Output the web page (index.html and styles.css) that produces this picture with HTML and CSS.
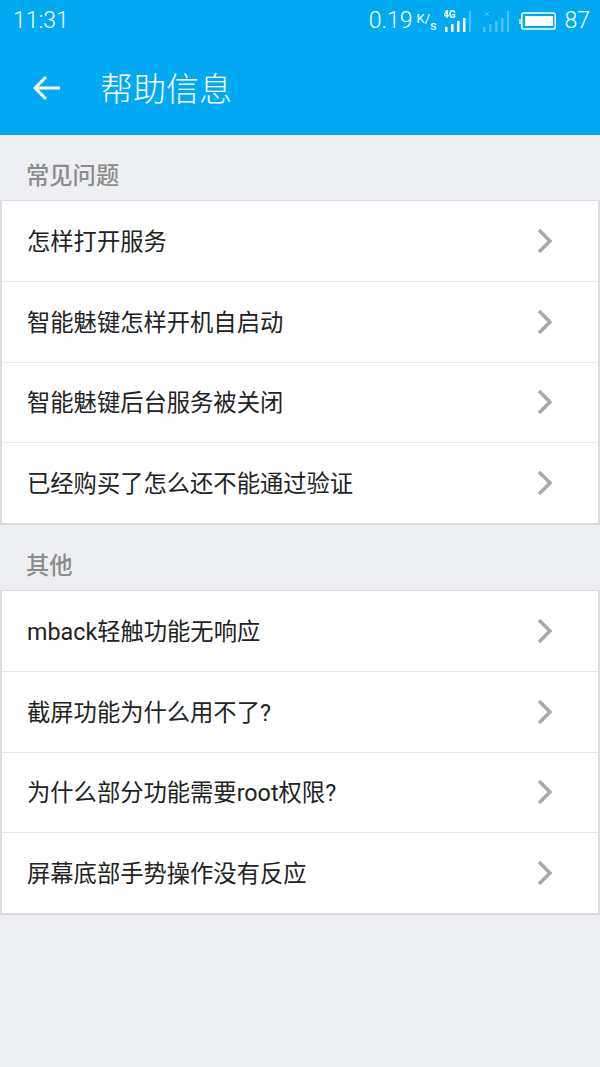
FILE: index.html
```html
<!DOCTYPE html>
<html lang="zh-CN">
<head>
  <meta charset="UTF-8">
  <meta name="viewport" content="width=device-width, initial-scale=1">
  <title>帮助信息</title>
  <link rel="stylesheet" href="styles.css">
</head>
<body>

<header class="top">
  <div class="statusbar">
    <span class="hora">11:31</span>
    <div class="status-right">
      <span class="velocidad">0.19</span>
      <span class="unidad"><span class="u-k">K</span><span>/</span><span class="u-s">s</span></span>
      <svg class="senal" width="28" height="24" viewBox="0 0 28 24">
        <text x="-1" y="9" class="red-txt">4G</text>
        <g fill="#fff">
          <rect x="1" y="18" width="2.5" height="5"/>
          <rect x="7" y="15" width="2.5" height="8"/>
          <rect x="13" y="12" width="2.5" height="11"/>
          <rect x="19" y="9" width="2.5" height="14"/>
        </g>
        <rect x="25" y="2" width="2" height="21" fill="#fff" opacity=".3"/>
      </svg>
      <svg class="senal senal-off" width="28" height="24" viewBox="0 0 28 24">
        <path d="M3 3l4 4M7 3l-4 4" stroke="#fff" stroke-width="1" opacity=".35"/>
        <g fill="#fff" opacity=".3">
          <rect x="1" y="18" width="2.5" height="5"/>
          <rect x="7" y="15" width="2.5" height="8"/>
          <rect x="13" y="12" width="2.5" height="11"/>
          <rect x="19" y="9" width="2.5" height="14"/>
          <rect x="25" y="2" width="2" height="21"/>
        </g>
      </svg>
      <svg class="bateria" width="37" height="18" viewBox="0 0 37 18">
        <rect x="0" y="7" width="2" height="5" fill="#fff" opacity=".7"/>
        <rect x="2.75" y="1" width="33.5" height="16" rx="2" fill="none" stroke="#fff" stroke-width="1.5"/>
        <rect x="6" y="4" width="28" height="10" fill="#fff"/>
      </svg>
      <span class="nivel">87</span>
    </div>
  </div>
  <div class="toolbar">
    <svg class="atras" width="30" height="26" viewBox="0 0 30 26">
      <path d="M28 13H3M14 2L3 13l11 11" fill="none" stroke="#fff" stroke-width="3"/>
    </svg>
    <h1>帮助信息</h1>
  </div>
</header>

<main>
  <h2>常见问题</h2>
  <ul class="lista">
    <li>怎样打开服务<svg class="flecha" viewBox="0 0 16 26"><path d="M2 2l11 11L2 24"/></svg></li>
    <li>智能魅键怎样开机自启动<svg class="flecha" viewBox="0 0 16 26"><path d="M2 2l11 11L2 24"/></svg></li>
    <li>智能魅键后台服务被关闭<svg class="flecha" viewBox="0 0 16 26"><path d="M2 2l11 11L2 24"/></svg></li>
    <li>已经购买了怎么还不能通过验证<svg class="flecha" viewBox="0 0 16 26"><path d="M2 2l11 11L2 24"/></svg></li>
  </ul>

  <h2>其他</h2>
  <ul class="lista">
    <li>mback轻触功能无响应<svg class="flecha" viewBox="0 0 16 26"><path d="M2 2l11 11L2 24"/></svg></li>
    <li>截屏功能为什么用不了?<svg class="flecha" viewBox="0 0 16 26"><path d="M2 2l11 11L2 24"/></svg></li>
    <li>为什么部分功能需要root权限?<svg class="flecha" viewBox="0 0 16 26"><path d="M2 2l11 11L2 24"/></svg></li>
    <li>屏幕底部手势操作没有反应<svg class="flecha" viewBox="0 0 16 26"><path d="M2 2l11 11L2 24"/></svg></li>
  </ul>
</main>

</body>
</html>
```

FILE: styles.css
```css
body {
  margin: 0;
  height: 1067px;
  overflow: hidden;
  background-color: #eeeff3;
  font-family: Roboto, "Noto Sans CJK SC", sans-serif;
}

.top {
  height: 135px;
  background-color: #00a9f2;
  color: white;
}

.statusbar {
  height: 41px;
  padding: 0 10px 0 13px;
  display: flex;
  justify-content: space-between;
  align-items: center;
  font-weight: 300;
  font-size: 23px;
}

.status-right {
  display: flex;
  align-items: center;
}

.unidad {
  display: flex;
  width: 19px;
  height: 18px;
  margin: 3px 9px 0 4px;
  font-size: 13px;
  font-weight: 400;
  line-height: 11px;
}

.u-k {
  align-self: flex-start;
}

.u-s {
  align-self: flex-end;
}

.red-txt {
  font-size: 10px;
  font-weight: 700;
  fill: white;
}

.senal-off {
  margin-left: 10px;
}

.bateria {
  margin: 0 8px 0 9px;
}

.toolbar {
  height: 94px;
  display: flex;
  align-items: center;
  padding-left: 32px;
}

.atras {
  margin-right: 38px;
}

h1 {
  margin: 0;
  padding-bottom: 3px;
  font-size: 33px;
  font-weight: 300;
}

h2 {
  margin: 0;
  height: 65px;
  box-sizing: border-box;
  padding: 25px 0 0 26px;
  line-height: 33px;
  font-size: 23.3px;
  font-weight: 500;
  color: #8c8c8c;
}

.lista {
  margin: 0;
  padding: 0;
  list-style: none;
  background-color: white;
  border: 1px solid #dcdcdf;
  border-width: 1px 2px;
}

.lista li {
  height: 80.75px;
  box-sizing: border-box;
  display: flex;
  align-items: center;
  justify-content: space-between;
  padding: 0 45px 2px 25px;
  border-bottom: 1px solid #e8e8ea;
  font-size: 23.3px;
  color: #222;
}

.lista li:last-child {
  border-bottom-color: #dcdcdf;
}

.flecha {
  width: 16px;
  height: 26px;
  margin-top: 2px;
  fill: none;
  stroke: #a9a9a9;
  stroke-width: 3.5;
}
```
